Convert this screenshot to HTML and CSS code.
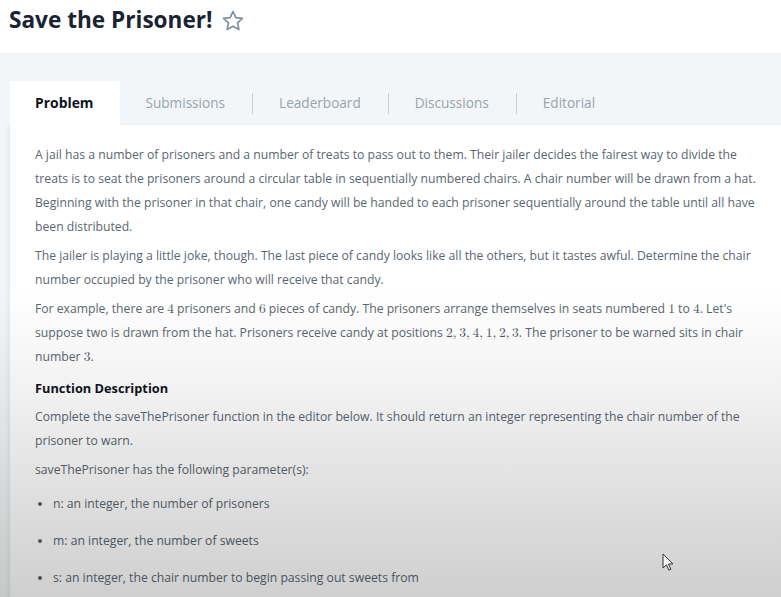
FILE: index.html
```html
<!DOCTYPE html>
<html>
<head>
<meta charset="utf-8">
<link rel="stylesheet" href="styles.css">
</head>
<body>
<header class="top">
  <h1 class="title">Save the Prisoner!</h1>
  <svg class="star" width="24" height="24" viewBox="0 0 24 24"><path d="M12 2.5l2.8 6.2 6.7.7-5 4.5 1.4 6.7L12 17.2l-5.9 3.4 1.4-6.7-5-4.5 6.7-.7z" fill="none" stroke="#7f919c" stroke-width="1.7" stroke-linejoin="round"/></svg>
</header>
<main class="area">
  <nav class="tabs">
    <div class="tab active">Problem</div>
    <div class="tab">Submissions</div>
    <div class="sep"></div>
    <div class="tab">Leaderboard</div>
    <div class="sep"></div>
    <div class="tab">Discussions</div>
    <div class="sep"></div>
    <div class="tab">Editorial</div>
  </nav>
  <section class="panel">
    <p>A jail has a number of prisoners and a number of treats to pass out to them. Their jailer decides the fairest way to divide the treats is to seat the prisoners around a circular table in sequentially numbered chairs. A chair number will be drawn from a hat. Beginning with the prisoner in that chair, one candy will be handed to each prisoner sequentially around the table until all have been distributed.</p>
    <p>The jailer is playing a little joke, though. The last piece of candy looks like all the others, but it tastes awful. Determine the chair number occupied by the prisoner who will receive that candy.</p>
    <p>For example, there are <span class="m">4</span> prisoners and <span class="m">6</span> pieces of candy. The prisoners arrange themselves in seats numbered <span class="m">1</span> to <span class="m">4</span>. Let's suppose two is drawn from the hat. Prisoners receive candy at positions <span class="m">2,&#8201;3,&#8201;4,&#8201;1,&#8201;2,&#8201;3</span>. The prisoner to be warned sits in chair number <span class="m">3</span>.</p>
    <h2 class="sub">Function Description</h2>
    <p>Complete the saveThePrisoner function in the editor below. It should return an integer representing the chair number of the prisoner to warn.</p>
    <p>saveThePrisoner has the following parameter(s):</p>
    <ul class="params">
      <li>n: an integer, the number of prisoners</li>
      <li>m: an integer, the number of sweets</li>
      <li>s: an integer, the chair number to begin passing out sweets from</li>
    </ul>
  </section>
</main>
<div class="shade"></div>
<svg class="cursor" width="14" height="20" viewBox="0 0 14 20"><path d="M1 1v14l3.5-3.2 2.4 5.4 2-.9-2.4-5.3H11z" fill="#f4f4f4" stroke="#333" stroke-width="1"/></svg>
</body>
</html>
```

FILE: styles.css
```css
html, body {
  margin: 0;
  padding: 0;
  height: 100%;
  overflow: hidden;
}
body {
  font-family: "Open Sans", "Liberation Sans", sans-serif;
  background: #f3f6f8;
  position: relative;
}
.top {
  background: #fff;
  height: 53px;
  display: flex;
  align-items: flex-start;
  padding-left: 9px;
  gap: 8px;
}
.title {
  margin: 4px 0 0;
  font-size: 22.6px;
  font-weight: 700;
  color: #1a2331;
  line-height: 32px;
}
.star {
  margin-top: 9px;
}
.area {
  padding: 28px 0 0 10px;
}
.tabs {
  display: flex;
  align-items: center;
  height: 44px;
}
.tab {
  font-size: 13.6px;
  color: #98a3ad;
  padding: 0 27px 0 26px;
  line-height: 44px;
}
.tab.active {
  font-size: 13.9px;
  background: #fff;
  color: #0e141e;
  font-weight: 700;
  padding: 0 26px 0 25px;
}
.sep {
  width: 1px;
  height: 21px;
  background: #c9cfd4;
}
.panel {
  background: #fff;
  padding: 18px 22px 20px 25px;
  box-shadow: -2px 0 4px rgba(0,0,0,0.06);
}
.panel p {
  margin: 0 0 5px;
  font-size: 12.2px;
  line-height: 24px;
  color: #5b6670;
}
.m {
  font-family: "Latin Modern Math", "DejaVu Serif", "Liberation Serif", serif;
  font-size: 13.5px;
  line-height: 1;
  color: #4a5560;
}
.sub {
  margin: 7px 0 5px;
  font-size: 12.8px;
  font-weight: 700;
  color: #0e141e;
  line-height: 24px;
}
.params {
  margin: 10px 0 0;
  padding-left: 18px;
}
.params li {
  font-size: 12.2px;
  line-height: 24px;
  color: #5b6670;
  margin-bottom: 13px;
}
.shade {
  position: absolute;
  left: 0;
  right: 0;
  top: 0;
  bottom: 0;
  pointer-events: none;
  background: linear-gradient(to bottom, rgba(0,0,0,0) 0px, rgba(0,0,0,0) 290px, rgba(0,0,0,0.06) 400px, rgba(0,0,0,0.13) 500px, rgba(0,0,0,0.19) 597px);
}
.cursor {
  position: absolute;
  left: 662px;
  top: 553px;
}
```
